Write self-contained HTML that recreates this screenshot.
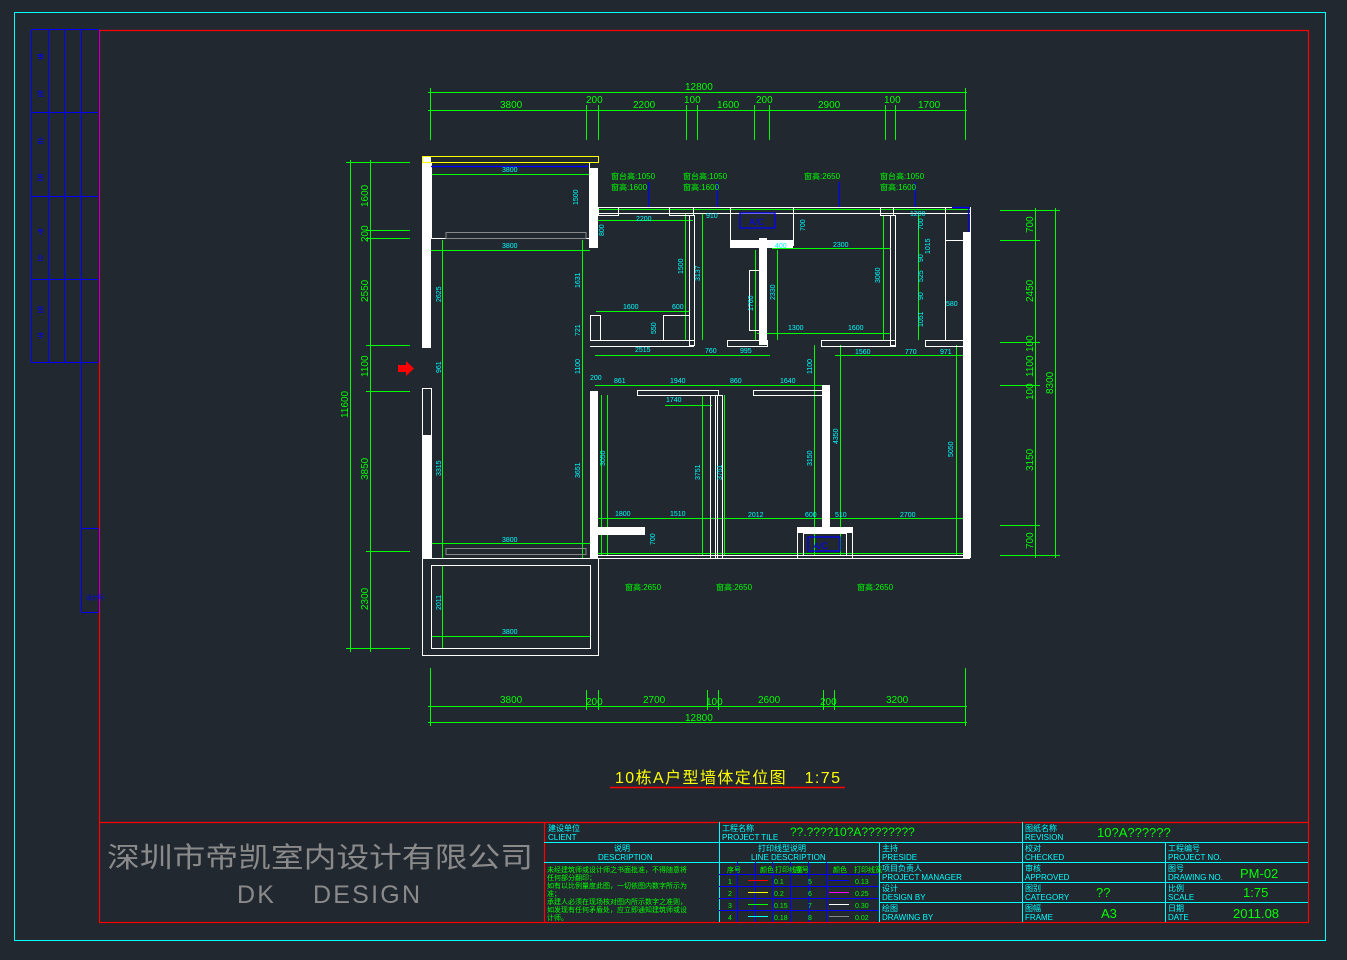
<!DOCTYPE html>
<html><head><meta charset="utf-8"><style>
html,body{margin:0;padding:0;background:#212830;}
svg{display:block}
text{font-family:"Liberation Sans","Noto Sans CJK SC",sans-serif;}
.c{fill:#00ffff;font-size:7px}
.g{fill:#00ff00;font-size:10px}
.t{fill:#00ffff;font-size:9px}
</style></head><body>
<svg width="1347" height="960" viewBox="0 0 1347 960" xmlns="http://www.w3.org/2000/svg">
<rect width="1347" height="960" fill="#212830"/>
<rect x="14.5" y="12.5" width="1311" height="928" fill="none" stroke="#00ffff" stroke-width="1"/>
<rect x="99.5" y="30.5" width="1209" height="892" fill="none" stroke="#ff0000" stroke-width="1.2"/>
<g stroke="#0000ff" stroke-width="1" fill="none">
<rect x="31.5" y="29.5" width="67" height="333"/>
<line x1="48.5" y1="29" x2="48.5" y2="362"/><line x1="64.5" y1="29" x2="64.5" y2="362"/><line x1="81.5" y1="29" x2="81.5" y2="612"/>
<line x1="31" y1="112.5" x2="98" y2="112.5"/><line x1="31" y1="196.5" x2="98" y2="196.5"/><line x1="31" y1="279.5" x2="98" y2="279.5"/>
<rect x="81.5" y="528.5" width="17" height="84"/>
</g>
<g fill="#0000ff" font-size="7"><text x="37" y="59">审</text><text x="37" y="96">批</text><text x="37" y="143">会</text><text x="37" y="180">签</text><text x="37" y="234">专</text><text x="37" y="260">业</text><text x="37" y="312">签</text><text x="37" y="338">字</text><text x="86" y="600" font-size="6">设计号</text></g>

<g stroke="#00ff00" stroke-width="1" fill="none">
<line x1="428" y1="92.5" x2="967" y2="92.5"/><line x1="428" y1="110.5" x2="967" y2="110.5"/>
<line x1="430.5" y1="88" x2="430.5" y2="140"/><line x1="586.5" y1="105" x2="586.5" y2="140"/><line x1="598.5" y1="105" x2="598.5" y2="140"/><line x1="686.5" y1="105" x2="686.5" y2="140"/><line x1="697.5" y1="105" x2="697.5" y2="140"/><line x1="754.5" y1="105" x2="754.5" y2="140"/><line x1="769.5" y1="105" x2="769.5" y2="140"/><line x1="885.5" y1="105" x2="885.5" y2="140"/><line x1="895.5" y1="105" x2="895.5" y2="140"/><line x1="965.5" y1="88" x2="965.5" y2="140"/>
<line x1="428" y1="706.5" x2="967" y2="706.5"/><line x1="428" y1="722.5" x2="967" y2="722.5"/>
<line x1="430.5" y1="668" x2="430.5" y2="726"/><line x1="586.5" y1="690" x2="586.5" y2="710"/><line x1="598.5" y1="690" x2="598.5" y2="710"/><line x1="707.5" y1="690" x2="707.5" y2="710"/><line x1="718.5" y1="690" x2="718.5" y2="710"/><line x1="823.5" y1="690" x2="823.5" y2="710"/><line x1="834.5" y1="690" x2="834.5" y2="710"/><line x1="965.5" y1="668" x2="965.5" y2="726"/>
<line x1="350.5" y1="160" x2="350.5" y2="652"/><line x1="370.5" y1="160" x2="370.5" y2="652"/>
<line x1="346" y1="162.5" x2="410" y2="162.5"/><line x1="366" y1="230.5" x2="410" y2="230.5"/><line x1="366" y1="238.5" x2="410" y2="238.5"/><line x1="366" y1="345.5" x2="410" y2="345.5"/><line x1="366" y1="391.5" x2="410" y2="391.5"/><line x1="366" y1="551.5" x2="410" y2="551.5"/><line x1="346" y1="648.5" x2="410" y2="648.5"/>
<line x1="1035.5" y1="208" x2="1035.5" y2="558"/><line x1="1055.5" y1="208" x2="1055.5" y2="558"/>
<line x1="1000" y1="210.5" x2="1060" y2="210.5"/><line x1="1000" y1="240.5" x2="1040" y2="240.5"/><line x1="1000" y1="342.5" x2="1040" y2="342.5"/><line x1="1000" y1="385.5" x2="1040" y2="385.5"/><line x1="1000" y1="525.5" x2="1040" y2="525.5"/><line x1="1000" y1="555.5" x2="1060" y2="555.5"/>
<line x1="431" y1="174.5" x2="590" y2="174.5"/><line x1="431" y1="250.5" x2="590" y2="250.5"/><line x1="431" y1="543.5" x2="590" y2="543.5"/><line x1="431" y1="636.5" x2="590" y2="636.5"/>
<line x1="442.5" y1="240" x2="442.5" y2="558"/><line x1="582.5" y1="240" x2="582.5" y2="558"/><line x1="442.5" y1="565" x2="442.5" y2="648"/>
<line x1="597" y1="220.5" x2="693" y2="220.5"/><line x1="595" y1="355.5" x2="770" y2="355.5"/><line x1="595" y1="385.5" x2="830" y2="385.5"/>
<line x1="835" y1="355.5" x2="965" y2="355.5"/><line x1="757" y1="333.5" x2="890" y2="333.5"/><line x1="772" y1="248.5" x2="890" y2="248.5"/>
<line x1="595" y1="518.5" x2="965" y2="518.5"/><line x1="596" y1="311.5" x2="690" y2="311.5"/><line x1="665" y1="405.5" x2="712" y2="405.5"/>
<line x1="685.5" y1="213" x2="685.5" y2="340"/><line x1="702.5" y1="213" x2="702.5" y2="340"/><line x1="755.5" y1="250" x2="755.5" y2="340"/><line x1="777.5" y1="250" x2="777.5" y2="340"/><line x1="883.5" y1="215" x2="883.5" y2="340"/>
<line x1="601.5" y1="395" x2="601.5" y2="555"/><line x1="607.5" y1="395" x2="607.5" y2="555"/><line x1="702.5" y1="395" x2="702.5" y2="555"/><line x1="724.5" y1="395" x2="724.5" y2="555"/><line x1="814.5" y1="345" x2="814.5" y2="555"/><line x1="840.5" y1="345" x2="840.5" y2="555"/><line x1="956.5" y1="345" x2="956.5" y2="555"/><line x1="918.5" y1="215" x2="918.5" y2="340"/>
<line x1="598" y1="209.5" x2="970" y2="209.5"/><line x1="598" y1="553.5" x2="970" y2="553.5"/>
</g>
<g fill="#ffffff">
<rect x="422" y="156" width="9" height="192"/><rect x="422" y="435" width="9" height="123"/>
<rect x="589" y="168" width="9" height="80"/><rect x="963" y="232" width="8" height="326"/>
<rect x="759" y="238" width="8" height="107"/><rect x="822" y="385" width="8" height="142"/>
<rect x="590" y="391" width="8" height="167"/><rect x="598" y="527" width="47" height="8"/>
<rect x="797" y="527" width="55" height="6"/><rect x="730" y="240" width="63" height="8"/>
</g>
<g stroke="#ffffff" stroke-width="1" fill="none">
<rect x="422.5" y="388.5" width="9" height="170"/>
<rect x="431.5" y="162.5" width="158" height="76"/>
<line x1="598" y1="207.5" x2="970" y2="207.5"/><line x1="598" y1="213.5" x2="970" y2="213.5"/>
<rect x="598.5" y="207.5" width="20" height="8"/><rect x="669.5" y="207.5" width="24" height="8"/><rect x="730.5" y="207.5" width="63" height="38"/><rect x="880.5" y="207.5" width="13" height="8"/><rect x="945.5" y="207.5" width="25" height="33"/>
<rect x="689.5" y="215.5" width="5" height="130"/><rect x="890.5" y="215.5" width="5" height="130"/>
<line x1="590" y1="340.5" x2="694" y2="340.5"/><line x1="590" y1="346.5" x2="694" y2="346.5"/>
<rect x="727.5" y="340.5" width="40" height="6"/><rect x="821.5" y="340.5" width="74" height="6"/><rect x="925.5" y="340.5" width="38" height="6"/>
<rect x="590.5" y="315.5" width="10" height="25"/><rect x="663.5" y="315.5" width="26" height="25"/>
<rect x="637.5" y="390.5" width="81" height="5"/><rect x="753.5" y="390.5" width="69" height="5"/>
<rect x="710.5" y="395.5" width="5" height="163"/><rect x="717.5" y="395.5" width="5" height="163"/>
<line x1="590" y1="555.5" x2="970" y2="555.5"/><line x1="590" y1="558.5" x2="970" y2="558.5"/>
<rect x="797.5" y="527.5" width="55" height="31"/><rect x="803.5" y="533.5" width="43" height="22"/>
<rect x="422.5" y="558.5" width="176" height="97"/><rect x="431.5" y="565.5" width="159" height="83"/>
<rect x="749.5" y="270.5" width="10" height="60"/><rect x="945.5" y="240.5" width="18" height="100"/>
</g>
<g stroke="#888888" fill="none"><rect x="446" y="232.5" width="140" height="6"/><rect x="446" y="548.5" width="140" height="6"/></g>
<rect x="422.5" y="156.5" width="176" height="6" fill="none" stroke="#ffff00"/>
<g stroke="#0000ff" stroke-width="1.2" fill="none">
<line x1="431" y1="166.5" x2="588" y2="166.5"/><rect x="740" y="213" width="35" height="15"/><rect x="808" y="537" width="32" height="14"/>
<line x1="952" y1="207.5" x2="970" y2="207.5"/><line x1="968.5" y1="207" x2="968.5" y2="232"/>
<line x1="648.5" y1="182" x2="648.5" y2="207"/><line x1="717.5" y1="182" x2="717.5" y2="207"/><line x1="839.5" y1="182" x2="839.5" y2="207"/><line x1="915.5" y1="182" x2="915.5" y2="207"/>
</g>
<text x="749" y="225" fill="#0000ff" font-size="9">A/C</text><text x="813" y="549" fill="#0000ff" font-size="9">A/C</text>
<polygon points="398,365 406,365 406,361 414,368.5 406,376 406,372 398,372" fill="#ff0000"/>
<g class="g">
<text x="685" y="90">12800</text><text x="500" y="108">3800</text><text x="586" y="103">200</text><text x="633" y="108">2200</text><text x="684" y="103">100</text><text x="717" y="108">1600</text><text x="756" y="103">200</text><text x="818" y="108">2900</text><text x="884" y="103">100</text><text x="918" y="108">1700</text>
<text x="500" y="703">3800</text><text x="586" y="705">200</text><text x="643" y="703">2700</text><text x="706" y="705">100</text><text x="758" y="703">2600</text><text x="820" y="705">200</text><text x="886" y="703">3200</text><text x="685" y="721">12800</text>
</g>
<g class="g">
<text transform="translate(348,418) rotate(-90)">11600</text>
<text transform="translate(368,207) rotate(-90)">1600</text><text transform="translate(368,242) rotate(-90)">200</text><text transform="translate(368,302) rotate(-90)">2550</text><text transform="translate(368,377) rotate(-90)">1100</text><text transform="translate(368,480) rotate(-90)">3850</text><text transform="translate(368,610) rotate(-90)">2300</text>
<text transform="translate(1033,233) rotate(-90)">700</text><text transform="translate(1033,302) rotate(-90)">2450</text><text transform="translate(1033,352) rotate(-90)">100</text><text transform="translate(1033,377) rotate(-90)">1100</text><text transform="translate(1033,400) rotate(-90)">100</text><text transform="translate(1033,471) rotate(-90)">3150</text><text transform="translate(1033,549) rotate(-90)">700</text><text transform="translate(1053,394) rotate(-90)">8300</text>
</g>
<g class="c">
<text x="502" y="172">3800</text><text x="502" y="248">3800</text><text x="502" y="542">3800</text><text x="502" y="634">3800</text>
<text x="636" y="221">2200</text><text x="706" y="218">910</text><text x="910" y="216">1200</text><text x="833" y="247">2300</text><text x="623" y="309">1600</text><text x="672" y="309">600</text>
<text x="635" y="352">2515</text><text x="705" y="353">760</text><text x="740" y="353">995</text><text x="788" y="330">1300</text><text x="848" y="330">1600</text><text x="855" y="354">1560</text><text x="905" y="354">770</text><text x="940" y="354">971</text>
<text x="590" y="380">200</text><text x="614" y="383">861</text><text x="670" y="383">1940</text><text x="730" y="383">860</text><text x="780" y="383">1640</text><text x="666" y="402">1740</text>
<text x="615" y="516">1800</text><text x="670" y="516">1510</text><text x="748" y="517">2012</text><text x="805" y="517">600</text><text x="835" y="517">510</text><text x="900" y="517">2700</text><text x="946" y="306">580</text><text x="775" y="248">400</text>
</g>
<g class="c">
<text transform="translate(441,302) rotate(-90)">2625</text><text transform="translate(441,373) rotate(-90)">961</text><text transform="translate(441,476) rotate(-90)">3315</text><text transform="translate(441,610) rotate(-90)">2011</text>
<text transform="translate(580,288) rotate(-90)">1631</text><text transform="translate(580,336) rotate(-90)">721</text><text transform="translate(580,374) rotate(-90)">1100</text><text transform="translate(580,478) rotate(-90)">3651</text><text transform="translate(578,205) rotate(-90)">1500</text><text transform="translate(604,236) rotate(-90)">800</text>
<text transform="translate(683,274) rotate(-90)">1500</text><text transform="translate(700,281) rotate(-90)">3137</text><text transform="translate(656,334) rotate(-90)">550</text><text transform="translate(753,311) rotate(-90)">1760</text><text transform="translate(775,300) rotate(-90)">2330</text><text transform="translate(805,231) rotate(-90)">700</text><text transform="translate(880,283) rotate(-90)">3060</text>
<text transform="translate(605,466) rotate(-90)">3050</text><text transform="translate(700,480) rotate(-90)">3751</text><text transform="translate(722,480) rotate(-90)">3751</text><text transform="translate(812,466) rotate(-90)">3150</text><text transform="translate(838,444) rotate(-90)">4350</text><text transform="translate(953,457) rotate(-90)">5050</text><text transform="translate(812,374) rotate(-90)">1100</text><text transform="translate(655,545) rotate(-90)">700</text>
<text transform="translate(923,230) rotate(-90)">700</text><text transform="translate(930,254) rotate(-90)">1015</text><text transform="translate(923,262) rotate(-90)">90</text><text transform="translate(923,282) rotate(-90)">525</text><text transform="translate(923,300) rotate(-90)">90</text><text transform="translate(923,327) rotate(-90)">1051</text>
</g>
<g fill="#00ff00" font-size="8">
<text x="611" y="179">窗台高:1050</text><text x="611" y="190">窗高:1600</text><text x="683" y="179">窗台高:1050</text><text x="683" y="190">窗高:1600</text><text x="804" y="179">窗高:2650</text><text x="880" y="179">窗台高:1050</text><text x="880" y="190">窗高:1600</text>
<text x="625" y="590">窗高:2650</text><text x="716" y="590">窗高:2650</text><text x="857" y="590">窗高:2650</text>
</g>
<text x="615" y="783" fill="#ffff00" font-size="16" textLength="225" lengthAdjust="spacing" xml:space="preserve">10栋A户型墙体定位图   1:75</text>
<line x1="610" y1="787.5" x2="845" y2="787.5" stroke="#ff0000" stroke-width="1.5"/>
<g stroke="#ff0000" stroke-width="1.2" fill="none">
<line x1="99" y1="822.5" x2="1308" y2="822.5"/>
<line x1="544.5" y1="822" x2="544.5" y2="922"/>
</g>
<g stroke="#00ffff" stroke-width="1" fill="none">
<line x1="544" y1="842.5" x2="1308" y2="842.5"/><line x1="544" y1="862.5" x2="1308" y2="862.5"/><line x1="879" y1="882.5" x2="1308" y2="882.5"/><line x1="879" y1="902.5" x2="1308" y2="902.5"/>
<line x1="719.5" y1="822" x2="719.5" y2="922"/><line x1="879.5" y1="842" x2="879.5" y2="922"/><line x1="1022.5" y1="822" x2="1022.5" y2="922"/><line x1="1165.5" y1="842" x2="1165.5" y2="922"/>
</g>
<g stroke="#0000ff" stroke-width="1" fill="none">
<line x1="719" y1="874.5" x2="879" y2="874.5"/><line x1="719" y1="886.5" x2="879" y2="886.5"/><line x1="719" y1="898.5" x2="879" y2="898.5"/><line x1="719" y1="910.5" x2="879" y2="910.5"/>
<line x1="737.5" y1="862" x2="737.5" y2="922"/><line x1="755.5" y1="862" x2="755.5" y2="922"/><line x1="772.5" y1="862" x2="772.5" y2="922"/><line x1="790.5" y1="862" x2="790.5" y2="922"/><line x1="808.5" y1="862" x2="808.5" y2="922"/><line x1="826.5" y1="862" x2="826.5" y2="922"/>
</g>
<line x1="748" y1="880.5" x2="768" y2="880.5" stroke="#ff0000"/><line x1="748" y1="892.5" x2="768" y2="892.5" stroke="#ffff00"/><line x1="748" y1="904.5" x2="768" y2="904.5" stroke="#00ff00"/><line x1="748" y1="916.5" x2="768" y2="916.5" stroke="#00ffff"/>
<line x1="829" y1="880.5" x2="849" y2="880.5" stroke="#0000ff"/><line x1="829" y1="892.5" x2="849" y2="892.5" stroke="#ff00ff"/><line x1="829" y1="904.5" x2="849" y2="904.5" stroke="#ffffff"/><line x1="829" y1="916.5" x2="849" y2="916.5" stroke="#888888"/>
<g fill="#00ff00" font-size="7">
<text x="727" y="872">序号</text><text x="760" y="872">颜色</text><text x="775" y="872">打印线宽</text><text x="795" y="872">序号</text><text x="833" y="872">颜色</text><text x="854" y="872">打印线宽</text>
<text x="728" y="884">1</text><text x="774" y="884">0.1</text><text x="808" y="884">5</text><text x="855" y="884">0.13</text>
<text x="728" y="896">2</text><text x="774" y="896">0.2</text><text x="808" y="896">6</text><text x="855" y="896">0.25</text>
<text x="728" y="908">3</text><text x="774" y="908">0.15</text><text x="808" y="908">7</text><text x="855" y="908">0.30</text>
<text x="728" y="920">4</text><text x="774" y="920">0.18</text><text x="808" y="920">8</text><text x="855" y="920">0.02</text>
<text x="547" y="872">未经建筑师或设计师之书面批准，不得随意将</text><text x="547" y="880">任何部分翻印；</text><text x="547" y="888">如有以比例量度此图，一切依图内数字所示为</text><text x="547" y="896">准；</text><text x="547" y="904">承建人必须在现场核对图内所示数字之准则，</text><text x="547" y="912">如发现有任何矛盾处，应立即通知建筑师或设</text><text x="547" y="920">计师。</text>
</g>
<g class="t" style="font-size:8px">
<text x="548" y="831">建设单位</text><text x="548" y="840">CLIENT</text>
<text x="722" y="831">工程名称</text><text x="722" y="840">PROJECT TILE</text>
<text x="1025" y="831">图纸名称</text><text x="1025" y="840">REVISION</text>
<text x="614" y="851">说明</text><text x="598" y="860">DESCRIPTION</text><text x="758" y="851">打印线型说明</text><text x="751" y="860">LINE DESCRIPTION</text>
<text x="882" y="851">主持</text><text x="882" y="860">PRESIDE</text><text x="1025" y="851">校对</text><text x="1025" y="860">CHECKED</text><text x="1168" y="851">工程编号</text><text x="1168" y="860">PROJECT NO.</text>
<text x="882" y="871">项目负责人</text><text x="882" y="880">PROJECT MANAGER</text><text x="1025" y="871">审核</text><text x="1025" y="880">APPROVED</text><text x="1168" y="871">图号</text><text x="1168" y="880">DRAWING NO.</text>
<text x="882" y="891">设计</text><text x="882" y="900">DESIGN BY</text><text x="1025" y="891">图别</text><text x="1025" y="900">CATEGORY</text><text x="1168" y="891">比例</text><text x="1168" y="900">SCALE</text>
<text x="882" y="911">绘图</text><text x="882" y="920">DRAWING BY</text><text x="1025" y="911">图幅</text><text x="1025" y="920">FRAME</text><text x="1168" y="911">日期</text><text x="1168" y="920">DATE</text>
</g>
<g fill="#00ff00" font-size="13">
<text x="790" y="836" font-size="12">??.????10?A????????</text><text x="1097" y="837">10?A??????</text>
<text x="1240" y="878">PM-02</text><text x="1096" y="897">??</text><text x="1243" y="897">1:75</text><text x="1101" y="918">A3</text><text x="1233" y="918">2011.08</text>
</g>
<text x="107" y="867" fill="#8a8a8a" font-size="28" textLength="426" lengthAdjust="spacingAndGlyphs" font-family="'Liberation Serif','Noto Serif CJK SC',serif">深圳市帝凯室内设计有限公司</text>
<text x="237" y="903" fill="#8a8a8a" font-size="25" textLength="183" lengthAdjust="spacing" font-family="'Liberation Serif',serif" xml:space="preserve">DK    DESIGN</text>
</svg>
</body></html>
